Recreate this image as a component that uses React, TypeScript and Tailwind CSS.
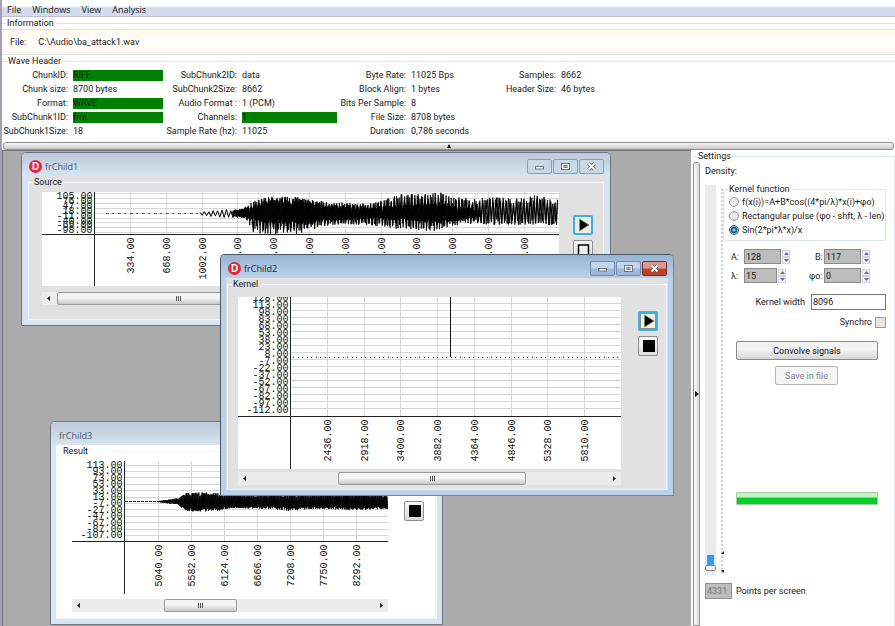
import { ReactNode, useState } from "react";

type Envelope = [number, number, number][];

const seeded = (seed: number) => () => {
  seed = (seed * 16807) % 2147483647;
  return seed / 2147483647;
};

/** Builds a zigzag path that fills the band given by [x, top, bottom] points. */
function wavePath(env: Envelope, mid: number, step: number, seed: number) {
  const rand = seeded(seed);
  let d = "";
  let up = true;
  let i = 0;
  const last = env[env.length - 1][0];
  for (let x = env[0][0]; x < last; x += step) {
    while (i < env.length - 2 && env[i + 1][0] < x) i++;
    const [x0, t0, b0] = env[i];
    const [x1, t1, b1] = env[i + 1];
    const k = (x - x0) / (x1 - x0);
    const top = t0 + (t1 - t0) * k;
    const bottom = b0 + (b1 - b0) * k;
    const amp = 0.5 + 0.5 * Math.sqrt(rand());
    const y = up ? mid - (mid - top) * amp : mid + (bottom - mid) * amp;
    d += `${d ? "L" : "M"}${x.toFixed(1)} ${y.toFixed(1)}`;
    up = !up;
  }
  return d;
}

interface ChartProps {
  width: number;
  height: number;
  axisX: number;
  axisY: number;
  rows: { first: number; step: number; count: number; gridFirst: number };
  columns: { first: number; step: number };
  yLabels: number[];
  xLabels: number[];
  name: string;
  children: ReactNode;
}

function Chart({ width, height, axisX, axisY, rows, columns, yLabels, xLabels, name, children }: ChartProps) {
  return (
    <svg width={width} height={height} role="img" aria-label={name} className="block bg-white">
      <g stroke="#d6d6d6">
        {Array.from({ length: rows.count }, (_, i) => {
          const y = Math.round(rows.gridFirst + i * rows.step) + 0.5;
          return <line key={i} x1={axisX} x2={width} y1={y} y2={y} />;
        })}
        {xLabels.map((_, i) => {
          const x = Math.round(columns.first + i * columns.step) + 0.5;
          return <line key={i} x1={x} x2={x} y1={0} y2={axisY} />;
        })}
      </g>
      <g fontSize="10" fill="#111" className="font-['Liberation_Mono',monospace]">
        {yLabels.map((v, i) => (
          <text key={v} x={axisX - 2} y={rows.first + i * rows.step} textAnchor="end">
            {v.toFixed(2)}
          </text>
        ))}
        {xLabels.map((v, i) => (
          <text
            key={v}
            textAnchor="end"
            transform={`translate(${columns.first + i * columns.step + 4} ${axisY + 3}) rotate(-90)`}
          >
            {v.toFixed(2)}
          </text>
        ))}
      </g>
      <path d={`M${axisX} 0V${height}M0 ${axisY}H${width}`} stroke="#222" fill="none" />
      {children}
    </svg>
  );
}

function ScrollBar({ thumb }: { thumb: string }) {
  return (
    <div className="relative flex h-[13px] items-center justify-between bg-[#ececec] px-1" role="scrollbar" aria-controls="chart" aria-valuenow={0}>
      <svg width="5" height="7" aria-hidden="true"><path d="M4 1L1 3.500L4 6Z" fill="#222" /></svg>
      <div className={`absolute inset-y-0 flex items-center justify-center gap-px rounded-[2px] border border-[#9a9a9a] bg-linear-to-b from-[#f4f4f4] from-45% to-[#c8c8cc] ${thumb}`}>
        <i className="h-[5px] w-px bg-[#555]" />
        <i className="h-[5px] w-px bg-[#555]" />
        <i className="h-[5px] w-px bg-[#555]" />
      </div>
      <svg width="5" height="7" aria-hidden="true"><path d="M1 1L4 3.500L1 6Z" fill="#222" /></svg>
    </div>
  );
}

function PlayerButtons({ active, hollow, className }: { active?: boolean; hollow?: boolean; className: string }) {
  return (
    <div className={`flex shrink-0 flex-col ${className}`}>
      <button aria-label="Play" className="flex h-5 w-5 items-center justify-center rounded-[2px] border-2 border-[#3fb0dc] bg-[#e9eef0]">
        <svg width="16" height="16" className="shrink-0">
          {active && <rect x="0.500" y="0.500" width="15" height="15" fill="none" stroke="#333" strokeDasharray="1 1" />}
          <path d="M4.500 2V14L14 8Z" fill="#000" stroke="#8c8a2a" strokeWidth="0.800" />
        </svg>
      </button>
      <button aria-label="Stop" className="flex h-5 w-5 items-center justify-center rounded-[2px] border border-[#8e8e8e] bg-linear-to-b from-[#f6f6f6] to-[#dcdcdc]">
        <svg width="14" height="14" className="shrink-0">
          {hollow ? (
            <rect x="2.500" y="2" width="10" height="11" fill="#eee" stroke="#000" strokeWidth="1.500" />
          ) : (
            <rect x="2" y="1" width="12" height="12" fill="#000" />
          )}
        </svg>
      </button>
    </div>
  );
}

function CaptionButtons({ active }: { active?: boolean }) {
  const plain = active
    ? "border-[#6f8aaa] bg-linear-to-b from-[#c3d5ea] from-45% to-[#9db8d8] to-55%"
    : "border-[#8b9db3] bg-[#c9d7e6]";
  const close = active
    ? "border-[#7a2d24] bg-linear-to-b from-[#dd9b8e] from-45% to-[#bf402c] to-55%"
    : plain;
  const base = "flex h-[15px] w-[25px] items-center justify-center rounded-[2px] border";
  return (
    <div className="mt-1 flex gap-px">
      <button aria-label="Minimize" className={`${base} ${plain}`}>
        <svg width="11" height="9"><rect x="1.500" y="4.500" width="8" height="2.500" fill="#fff" stroke="#6a7482" /></svg>
      </button>
      <button aria-label="Maximize" className={`${base} ${plain}`}>
        <svg width="11" height="9">
          <rect x="1.500" y="1.500" width="8" height="6" fill="#fff" stroke="#6a7482" />
          <rect x="4" y="3.500" width="3" height="2" fill="#9db0c6" stroke="#6a7482" />
        </svg>
      </button>
      <button aria-label="Close" className={`${base} ${close}`}>
        <svg width="11" height="9" fill="none">
          <path d="M2.500 1.500L8.500 7.500M8.500 1.500L2.500 7.500" stroke="#5f6672" strokeWidth="3.600" />
          <path d="M2.500 1.500L8.500 7.500M8.500 1.500L2.500 7.500" stroke="#fff" strokeWidth="1.800" />
        </svg>
      </button>
    </div>
  );
}

interface ChildProps {
  title: string;
  group: string;
  active?: boolean;
  icon?: boolean;
  place: string;
  client: string;
  body: string;
  children: ReactNode;
}

function ChildWindow({ title, group, active, icon, place, client, body, children }: ChildProps) {
  const frame = active
    ? "border-t-[#4c5662] border-l-[#4c5662] border-r-[#2fa3b8] border-b-[#2fa3b8] bg-[#b9d1ea]"
    : "border-[#6b7480] bg-[#d7e4f1]";
  const bar = active ? "from-[#98b4d4] to-[#b9d1ea]" : "from-[#bccad9] to-[#d7e4f1]";
  return (
    <section aria-label={title} className={`absolute rounded-t-[5px] border ${frame} ${place}`}>
      <header className={`flex h-[23px] items-center rounded-t-[4px] bg-linear-to-b pr-1.5 pl-[7px] ${bar}`}>
        {icon && (
          <span className="mt-1 mr-0.5 flex h-[13px] w-[13px] items-center justify-center rounded-full bg-[#e8243c] font-['Liberation_Sans',sans-serif] text-[10px] leading-3 font-bold text-white">
            D
          </span>
        )}
        <h2 className={`flex-1 pt-1 pl-px font-['Open_Sans',sans-serif] text-[9px] leading-3 ${active ? "text-[#1c2a3c]" : "text-[#4f5a68]"}`}>
          {title}
        </h2>
        {icon && <CaptionButtons active={active} />}
      </header>
      <div className={`mx-[5px] mb-[5px] px-px ${client}`}>
        <fieldset className="border border-[#eef4f9]">
          <legend className="ml-1 px-px leading-3">{group}</legend>
          <div className={`flex ${body}`}>{children}</div>
        </fieldset>
      </div>
    </section>
  );
}

const onsetEnvelope: Envelope = [
  [158, 19, 24], [175, 18, 25], [195, 17, 26], [204, 15, 28],
];
const sourceEnvelope: Envelope = [
  [196, 18, 25], [204, 14, 27], [211, 9, 40], [222, 5, 42], [240, 4, 42], [258, 5, 42],
  [270, 8, 38], [285, 9, 34], [303, 10, 32], [318, 11, 33], [333, 10, 34], [345, 7, 35], [354, 3, 37], [362, 0, 37],
  [370, 2, 37], [390, 1, 41], [398, 0, 38], [410, 5, 34], [430, 6, 32], [450, 5, 33], [475, 6, 33], [495, 3, 34], [517, 7, 33],
];
const coreEnvelope: Envelope = [
  [190, 19, 24], [215, 13, 28], [225, 6, 32], [265, 6, 33], [285, 12, 29], [330, 15, 27], [370, 12, 29], [400, 10, 32], [420, 15, 28], [440, 18, 25],
];
const resultEnvelope: Envelope = [
  [86, 40, 41], [100, 38, 43], [106, 37, 44], [114, 32, 50], [130, 31, 51], [145, 32, 50], [160, 34, 47], [200, 34, 48], [215, 34, 50],
  [240, 34, 48], [280, 33, 49], [316, 34, 48],
];

const range = (first: number, step: number, count: number) => Array.from({ length: count }, (_, i) => first + i * step);

function Desktop() {
  return (
    <main className="relative min-w-0 flex-1 overflow-hidden border-t border-l border-[#777] bg-[#ababab]">
      <ChildWindow title="frChild1" group="Source" icon place="top-px left-[18px] w-[590px]" client="bg-[#e1e1e1]" body="pt-1 pb-3.5 pl-[13px]">
        <div className="flex flex-col gap-1.5">
          <Chart
            name="Source signal" width={517} height={94} axisX={52.5} axisY={42.5}
            rows={{ first: 7, step: 4.9, count: 9, gridFirst: 1 }} columns={{ first: 88, step: 35.8 }}
            yLabels={range(105, -29, 8)} xLabels={range(334, 334, 12)}
          >
            <path d="M64 21.500H158" stroke="#555" strokeDasharray="3 3 2 4" />
            <path d={wavePath(onsetEnvelope, 21.5, 2.2, 77)} fill="none" stroke="#000" />
            <path d={wavePath(sourceEnvelope, 21.5, 1.7, 31)} fill="none" stroke="#000" strokeWidth="1.100" />
            <path d={wavePath(sourceEnvelope, 21.5, 1.3, 907)} fill="none" stroke="#000" strokeWidth="0.800" />
            <path d={wavePath(coreEnvelope, 21.5, 0.6, 41)} fill="none" stroke="#000" />
          </Chart>
          <ScrollBar thumb="left-[15px] w-[242px]" />
        </div>
        <PlayerButtons hollow className="mt-[23px] ml-3.5 gap-[5px]" />
      </ChildWindow>

      <ChildWindow title="frChild3" group="Result" place="top-[270px] left-[47px] w-[393px]" client="bg-white" body="pt-1 pb-1.5 pl-3.5">
        <div className="flex flex-col gap-[5px]">
          <Chart
            name="Convolution result" width={316} height={133} axisX={52.5} axisY={80.5}
            rows={{ first: 7, step: 6.4, count: 12, gridFirst: 3.5 }} columns={{ first: 85.5, step: 33 }}
            yLabels={range(113, -20, 12)} xLabels={range(5040, 542, 7)}
          >
            <path d="M53 40.500H90" stroke="#222" strokeDasharray="3 1" />
            <path d={wavePath(resultEnvelope, 40.5, 0.9, 19)} fill="none" stroke="#000" />
            <path d={wavePath(resultEnvelope, 40.5, 0.5, 53)} fill="none" stroke="#000" strokeWidth="0.700" />
          </Chart>
          <ScrollBar thumb="left-[92px] w-[73px]" />
        </div>
        <PlayerButtons className="mt-3 ml-4 gap-2" />
      </ChildWindow>

      <ChildWindow title="frChild2" group="Kernel" active icon place="top-[103px] left-[217px] w-[454px]" client="bg-[#e1e1e1]" body="pt-[7px] pb-1 pl-2.5">
        <div className="flex flex-col gap-[3px]">
          <Chart
            name="Kernel" width={383} height={172} axisX={52.5} axisY={119.5}
            rows={{ first: 4, step: 7, count: 16, gridFirst: 6 }} columns={{ first: 89, step: 36.7 }}
            yLabels={range(128, -15, 17)} xLabels={range(2436, 482, 8)}
          >
            <path d="M55 60.500H383" stroke="#222" strokeDasharray="1 4 1 3" />
            <path d="M212.500 0V60" stroke="#111" />
          </Chart>
          <ScrollBar thumb="left-[100px] w-[188px]" />
        </div>
        <PlayerButtons active className="mt-3.5 ml-[17px] gap-[5px]" />
      </ChildWindow>
    </main>
  );
}

const headerFields: { label: string; value: string; mark?: boolean }[][] = [
  [
    { label: "ChunkID:", value: "RIFF", mark: true },
    { label: "Chunk size:", value: "8700 bytes" },
    { label: "Format:", value: "WAVE", mark: true },
    { label: "SubChunk1ID:", value: "fmt", mark: true },
    { label: "SubChunk1Size:", value: "18" },
  ],
  [
    { label: "SubChunk2ID:", value: "data" },
    { label: "SubChunk2Size:", value: "8662" },
    { label: "Audio Format :", value: "1 (PCM)" },
    { label: "Channels:", value: "1", mark: true },
    { label: "Sample Rate (hz):", value: "11025" },
  ],
  [
    { label: "Byte Rate:", value: "11025 Bps" },
    { label: "Block Align:", value: "1 bytes" },
    { label: "Bits Per Sample:", value: "8" },
    { label: "File Size:", value: "8708 bytes" },
    { label: "Duration:", value: "0,786 seconds" },
  ],
  [
    { label: "Samples:", value: "8662" },
    { label: "Header Size:", value: "46 bytes" },
  ],
];

const headerColumns = [
  "w-[162px] grid-cols-[66px_90px]",
  "w-[173px] grid-cols-[73px_95px]",
  "w-[160px] grid-cols-[69px_86px]",
  "w-[160px] grid-cols-[59px_86px]",
];

function Information() {
  return (
    <>
      <fieldset className="border-t border-[#dbe6ee]">
        <legend className="ml-1 px-px leading-3">Information</legend>
        <div className="flex h-[26px] items-center gap-3 border-y border-[#dde6ea] bg-linear-to-b from-[#fff8ec] via-white to-[#fff8ec] px-2">
          <span>File:</span>
          <span>C:\Audio\ba_attack1.wav</span>
        </div>
      </fieldset>
      <fieldset className="border-t border-[#dbe6ee] pb-1">
        <legend className="ml-[5px] px-px leading-3">Wave Header</legend>
        <div className="flex pt-px">
          {headerFields.map((fields, c) => (
            <dl key={c} className={`grid auto-rows-[14px] content-start gap-x-[5px] ${headerColumns[c]}`}>
              {fields.map((f) => (
                <div key={f.label} className="col-span-2 grid grid-cols-subgrid items-center">
                  <dt className="text-right whitespace-nowrap">{f.label}</dt>
                  <dd className={`h-[11px] leading-[11px] whitespace-nowrap ${f.mark ? "bg-[#008000]" : ""}`}>{f.value}</dd>
                </div>
              ))}
            </dl>
          ))}
        </div>
      </fieldset>
    </>
  );
}

function Spin({ id, label, value, width, labelWidth }: { id: string; label: string; value: string; width: string; labelWidth: string }) {
  const arrow = "flex h-[7px] w-2 items-center justify-center border border-[#d4d4d4] bg-[#f3f3f3]";
  return (
    <div className="flex items-center">
      <label htmlFor={id} className={labelWidth}>{label}</label>
      <input id={id} defaultValue={value} className={`h-[15px] border border-[#8a8a8a] bg-[#bdbdbd] px-px ${width}`} />
      <div className="ml-px flex flex-col">
        <button aria-label={`Increase ${label}`} className={arrow}>
          <svg width="5" height="3" className="shrink-0"><path d="M0 3L2.500 0L5 3Z" fill="#5468b4" /></svg>
        </button>
        <button aria-label={`Decrease ${label}`} className={arrow}>
          <svg width="5" height="3" className="shrink-0"><path d="M0 0L2.500 3L5 0Z" fill="#5468b4" /></svg>
        </button>
      </div>
    </div>
  );
}

const kernels = ["f(x(i))=A+B*cos((4*pi/λ)*x(i)+φo)", "Rectangular pulse (φo - shft, λ - len)", "Sin(2*pi*λ*x)/x"];

function Settings() {
  const [kernel, setKernel] = useState(2);
  return (
    <fieldset className="ml-0.5 flex w-[202px] shrink-0 flex-col border-t border-r border-[#dbe6ee]">
      <legend className="ml-1 px-px leading-3">Settings</legend>
      <div className="flex min-h-0 flex-1 grow">
        <div className="flex w-[7px] shrink-0 items-center justify-center self-stretch rounded-t-[3px] border border-[#8f8f8f] bg-linear-to-r from-[#fafafa] to-[#dcdcdc]">
          <svg width="4" height="6" className="shrink-0"><path d="M0 0L4 3L0 6Z" fill="#111" /></svg>
        </div>
        <div className="flex min-w-0 flex-1 flex-col pr-2 pb-[27px] pl-[5px]">
          <label htmlFor="density" className="mt-[3px] leading-3">Density:</label>
          <div className="flex flex-1 pt-2">
            <div className="relative w-[11px] bg-[#e8eaec]">
              <div className="absolute bottom-2 left-[2px] h-3 w-[7px] bg-[#3399ff]" />
              <input
                id="density" type="range" defaultValue={1}
                className="absolute inset-0 h-full w-[11px] appearance-none bg-transparent [direction:rtl] [writing-mode:vertical-lr] [&::-webkit-slider-thumb]:h-1.5 [&::-webkit-slider-thumb]:w-[11px] [&::-webkit-slider-thumb]:appearance-none [&::-webkit-slider-thumb]:rounded-[2px] [&::-webkit-slider-thumb]:border [&::-webkit-slider-thumb]:border-[#888] [&::-webkit-slider-thumb]:bg-[#f4f4f4]"
              />
            </div>
            <div className="mt-1 mb-0.5 ml-[5px] flex w-0.5 flex-col justify-end border-l-2 border-dotted border-[#d2d2d2]">
              <svg width="3" height="22" className="-ml-0.5 shrink-0"><path d="M0 3L3 0V3ZM0 19H3V22Z" fill="#111" /></svg>
            </div>
            <div className="flex min-w-0 flex-1 flex-col">
              <fieldset className="-mt-0.5 rounded-[2px] border border-[#dbe6ee] pb-[3px]">
                <legend className="ml-1 px-px leading-3">Kernel function</legend>
                {kernels.map((k, i) => (
                  <label key={k} className="flex h-[14px] items-center gap-[3px] pl-[5px] whitespace-nowrap">
                    <input
                      type="radio" name="kernel" checked={kernel === i} onChange={() => setKernel(i)}
                      className="h-[10px] w-[10px] shrink-0 appearance-none rounded-full border border-[#9a9a9a] bg-[#ececec] checked:border-[#3c5a78] checked:bg-[radial-gradient(circle,#8fd4f5_0_1px,#145a8c_2px_3px,#e8f2f8_4px)]"
                    />
                    {k}
                  </label>
                ))}
              </fieldset>
              <div className="mt-2 flex flex-col gap-1 pl-2">
                <div className="flex justify-between pr-4">
                  <Spin id="a" label="A:" value="128" width="w-[37px]" labelWidth="w-[13px]" />
                  <Spin id="b" label="B:" value="117" width="w-[37px]" labelWidth="w-[9px]" />
                </div>
                <div className="flex justify-between pr-4">
                  <Spin id="lambda" label="λ:" value="15" width="w-[33px]" labelWidth="w-[13px]" />
                  <Spin id="phi" label="φo:" value="0" width="w-[37px]" labelWidth="w-[15px]" />
                </div>
              </div>
              <div className="mt-[11px] flex items-center justify-end gap-1.5">
                <label htmlFor="width">Kernel width</label>
                <input id="width" defaultValue="8096" className="h-4 w-[75px] border border-[#777] bg-white px-px" />
              </div>
              <label className="mt-1.5 flex items-center justify-end gap-[3px]">
                Synchro
                <input type="checkbox" className="h-[11px] w-[11px] appearance-none border border-[#9a9a9a] bg-[#e6e6e6] checked:bg-[#3399ff]" />
              </label>
              <button className="mt-[13px] mr-2 ml-[13px] h-[19px] rounded-[2px] border border-[#8a8a8a] bg-linear-to-b from-[#f3f3f3] from-45% to-[#d6d6d6] text-[#111]">
                Convolve signals
              </button>
              <button disabled className="mt-[6px] ml-[52px] h-[19px] w-[63px] rounded-[2px] border border-[#b4b4b4] bg-[#f5f5f5] text-[#8c8c8c]">
                Save in file
              </button>
              <div role="progressbar" aria-label="Progress" aria-valuenow={100} className="mt-[107px] mr-2 ml-[13px] h-[13px] rounded-[1px] border border-[#a9c9a9] bg-linear-to-b from-[#c4f4c8] from-35% to-[#04cf26] to-45%" />
            </div>
          </div>
          <div className="mt-2 flex items-center gap-1">
            <input id="points" disabled defaultValue="4331" className="h-4 w-[27px] border border-[#8f8f8f] bg-[#bdbdbd] px-px text-[#777]" />
            <label htmlFor="points">Points per screen</label>
          </div>
        </div>
      </div>
    </fieldset>
  );
}

export default function App() {
  return (
    <div className="flex min-h-screen flex-col border-l-2 border-[#a3a1ad] bg-white font-[Roboto,sans-serif] text-[9px] leading-3 text-[#1a1a1a]">
      <nav className="flex h-[17px] items-center gap-[11px] border-b border-[#b9c1d3] bg-linear-to-b from-white from-35% to-[#d3dbed] to-50% pt-[3px] pl-[5px] font-['Open_Sans',sans-serif] text-[9px]">
        {["File", "Windows", "View", "Analysis"].map((item) => (
          <button key={item}>{item}</button>
        ))}
      </nav>
      <Information />
      <div className="mx-px flex h-2 items-center justify-center rounded-[3px] border border-[#8f8f8f] bg-linear-to-b from-[#f6f6f6] to-[#c8c8c8]">
        <svg width="4" height="4"><path d="M0 4L2 0L4 4Z" fill="#111" /></svg>
      </div>
      <div className="flex min-h-0 flex-1">
        <Desktop />
        <Settings />
      </div>
    </div>
  );
}
